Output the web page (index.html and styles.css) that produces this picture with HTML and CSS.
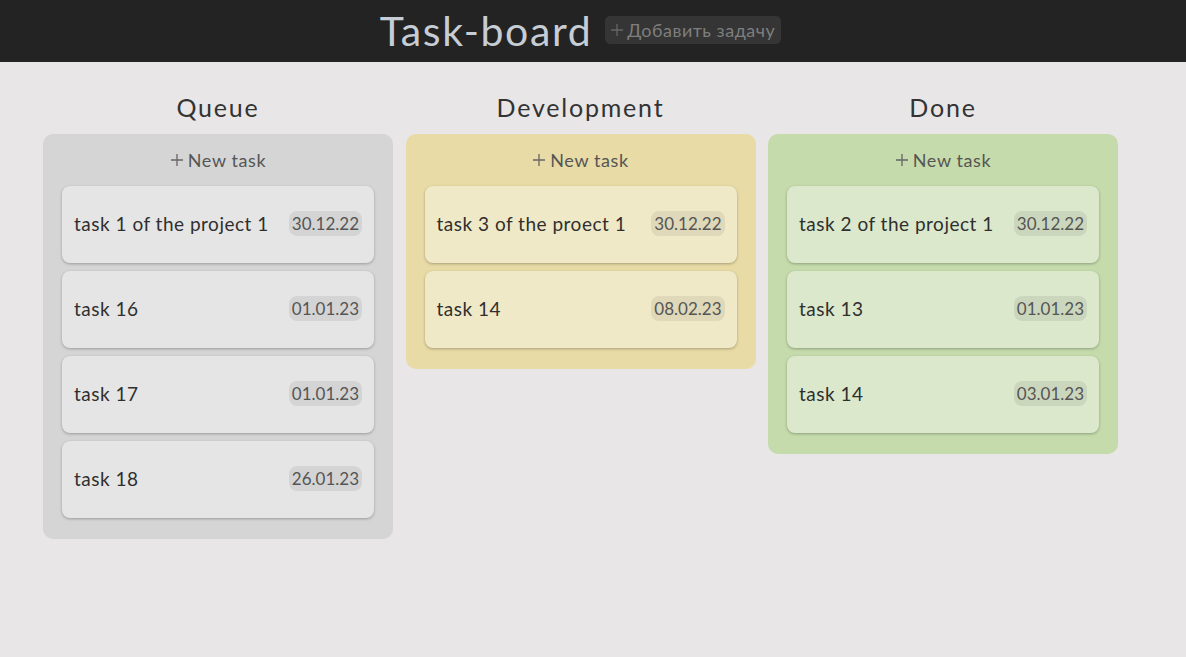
FILE: index.html
```html
<!DOCTYPE html>
<html lang="ru">
<head>
<meta charset="utf-8">
<title>Task-board</title>
<link rel="stylesheet" href="styles.css">
</head>
<body>
<header class="topbar">
  <h1 class="brand">Task-board</h1>
  <button class="add-btn"><svg class="plus" viewBox="0 0 14 14" width="14" height="14"><path d="M7 1v12M1 7h12" stroke="currentColor" stroke-width="1.3" fill="none"/></svg>Добавить задачу</button>
</header>
<main class="board">
  <section class="col">
    <h2 class="col-title">Queue</h2>
    <div class="col-box queue">
      <div class="new-task"><svg class="plus" viewBox="0 0 14 14" width="14" height="14"><path d="M7 1v12M1 7h12" stroke="currentColor" stroke-width="1.3" fill="none"/></svg>New task</div>
      <div class="card"><span class="name">task 1 of the project 1</span><span class="date">30.12.22</span></div>
      <div class="card"><span class="name">task 16</span><span class="date">01.01.23</span></div>
      <div class="card"><span class="name">task 17</span><span class="date">01.01.23</span></div>
      <div class="card"><span class="name">task 18</span><span class="date">26.01.23</span></div>
    </div>
  </section>
  <section class="col">
    <h2 class="col-title">Development</h2>
    <div class="col-box dev">
      <div class="new-task"><svg class="plus" viewBox="0 0 14 14" width="14" height="14"><path d="M7 1v12M1 7h12" stroke="currentColor" stroke-width="1.3" fill="none"/></svg>New task</div>
      <div class="card"><span class="name">task 3 of the proect 1</span><span class="date">30.12.22</span></div>
      <div class="card"><span class="name">task 14</span><span class="date">08.02.23</span></div>
    </div>
  </section>
  <section class="col">
    <h2 class="col-title">Done</h2>
    <div class="col-box done">
      <div class="new-task"><svg class="plus" viewBox="0 0 14 14" width="14" height="14"><path d="M7 1v12M1 7h12" stroke="currentColor" stroke-width="1.3" fill="none"/></svg>New task</div>
      <div class="card"><span class="name">task 2 of the project 1</span><span class="date">30.12.22</span></div>
      <div class="card"><span class="name">task 13</span><span class="date">01.01.23</span></div>
      <div class="card"><span class="name">task 14</span><span class="date">03.01.23</span></div>
    </div>
  </section>
</main>
</body>
</html>
```

FILE: styles.css
```css
* { box-sizing: border-box; }
html, body { margin: 0; padding: 0; }
body {
  background: #e8e6e7;
  font-family: "Lato", "Liberation Sans", sans-serif;
  color: #333;
  height: 657px;
  overflow: hidden;
}
.topbar {
  height: 62px;
  background: #232323;
  display: flex;
  align-items: center;
  justify-content: center;
  gap: 13px;
  padding-right: 25px;
}
.brand {
  margin: 0;
  font-weight: 400;
  font-size: 41px;
  color: #c6cdd4;
  letter-spacing: 1.6px;
  line-height: 1;
  padding-bottom: 2px;
}
.add-btn {
  font-family: inherit;
  border: none;
  background: #353535;
  color: #7e7e7e;
  font-size: 18px;
  letter-spacing: 0.5px;
  height: 28px;
  padding: 0 6px 0 5px;
  border-radius: 5px;
  display: flex;
  align-items: center;
  margin-top: -2px;
}
.add-btn .plus { margin-right: 3px; color: #666; }
.board {
  display: flex;
  gap: 12.5px;
  padding-left: 43px;
  align-items: flex-start;
}
.col { width: 350px; }
.col-title {
  margin: 0;
  height: 72px;
  padding-top: 17px;
  display: flex;
  align-items: center;
  justify-content: center;
  font-weight: 400;
  font-size: 25px;
  color: #333;
  letter-spacing: 1.8px;
}
.col-box {
  border-radius: 10px;
  padding: 0 19px 21px;
}
.queue { background: #d5d5d5; }
.queue .card { background: #e5e5e5; }
.dev { background: #e8dba5; }
.dev .card { background: #f0e9c7; }
.done { background: #c5dbab; }
.done .card { background: #dbe8cc; }
.new-task {
  height: 52px;
  display: flex;
  align-items: center;
  justify-content: center;
  font-size: 18px;
  letter-spacing: 0.6px;
  color: #555;
}
.new-task .plus { margin-right: 4px; color: #666; }
.card {
  height: 77px;
  border-radius: 8px;
  box-shadow: 0 1px 3px rgba(0,0,0,0.28);
  display: flex;
  align-items: center;
  justify-content: space-between;
  padding: 0 12px 2px 12px;
  margin-bottom: 8px;
}
.card:last-child { margin-bottom: 0; }
.name { font-size: 19px; color: #2f2f2f; letter-spacing: 0.5px; }
.date {
  font-size: 17px;
  color: #555;
  background: rgba(0,0,0,0.07);
  border-radius: 8px;
  padding: 2px 3px;
}
```
